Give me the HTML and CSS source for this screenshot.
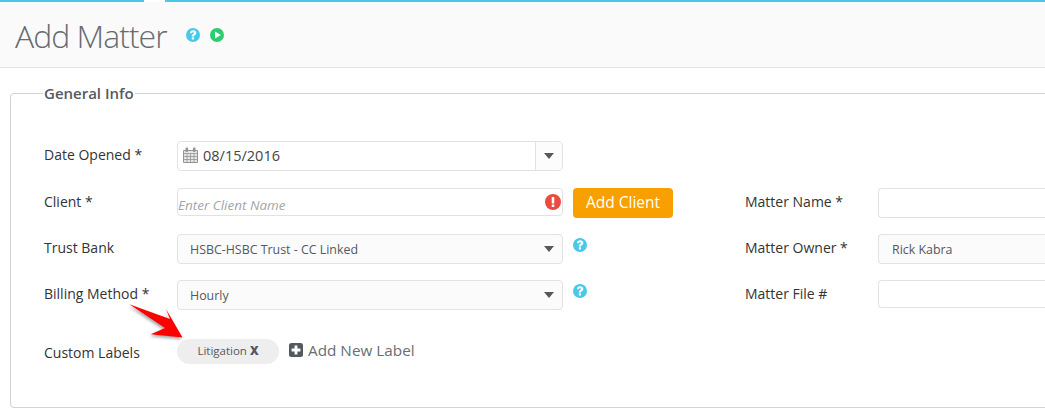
FILE: index.html
```html
<!DOCTYPE html>
<html lang="en">
<head>
<meta charset="utf-8">
<title>Add Matter</title>
<link rel="stylesheet" href="styles.css">
</head>
<body>
<svg class="defs" width="0" height="0" aria-hidden="true">
  <symbol id="help" viewBox="0 0 14 14">
    <circle cx="7" cy="7" r="7" fill="#4ac8ea"/>
    <path d="M3.900 5.200C4 3.300 5.400 2.300 7.100 2.300c1.900 0 3.200 1.100 3.200 2.700 0 1.200-.7 1.800-1.500 2.300-.6.400-.8.700-.8 1.100H5.800c0-1.200.5-1.900 1.300-2.400.6-.4.9-.6.9-1 0-.5-.4-.8-1-.8-.7 0-1.100.4-1.200 1z" fill="#fff"/>
    <rect x="5.800" y="9.300" width="2.200" height="2.200" fill="#fff"/>
  </symbol>
</svg>
<div class="tabline"><span class="tabgap"></span></div>
<header class="head">
  <h1>Add Matter</h1>
  <svg class="ico"><use href="#help"/></svg>
  <svg class="ico" viewBox="0 0 14 14"><circle cx="7" cy="7" r="7" fill="#2ecc71"/><path d="M5 3.400v7.200L10.800 7z" fill="#fff"/></svg>
</header>
<main class="page">
  <fieldset class="box">
    <legend>General Info</legend>
    <div class="form">
      <label>Date Opened *</label>
      <div class="ctl date">
        <svg class="cal" viewBox="0 0 15 16"><path d="M.5 3.500h14V15.500H.5z" fill="#e6e6e6" stroke="#949494" stroke-width="1"/><path d="M.5 6.500h14M.5 9.500h14M.5 12.500h14M4 6.500v9M7.500 6.500v9M11 6.500v9" stroke="#949494" stroke-width=".8" fill="none"/><rect x="2.500" y="0.500" width="2.600" height="4.500" rx="1" fill="#949494"/><rect x="9.900" y="0.500" width="2.600" height="4.500" rx="1" fill="#949494"/></svg>
        <span class="dateval">08/15/2016</span>
        <span class="split"><i class="caret"></i></span>
      </div>
      <span></span><span></span><span></span>

      <label>Client *</label>
      <div class="ctl client">
        <span class="ph">Enter Client Name</span>
        <svg class="err" viewBox="0 0 16 16"><circle cx="8" cy="8" r="8" fill="#e74c3c"/><rect x="6.700" y="3" width="2.600" height="6.600" rx=".6" fill="#fff"/><rect x="6.700" y="10.600" width="2.600" height="2.400" rx=".5" fill="#fff"/></svg>
      </div>
      <div class="aside"><button class="add" type="button">Add Client</button></div>
      <label>Matter Name *</label>
      <div class="ctl open"></div>

      <label>Trust Bank</label>
      <div class="ctl sel"><span>HSBC-HSBC Trust - CC Linked</span><i class="caret"></i></div>
      <div class="aside"><svg class="ico"><use href="#help"/></svg></div>
      <label>Matter Owner *</label>
      <div class="ctl sel open"><span>Rick Kabra</span></div>

      <label>Billing Method *</label>
      <div class="ctl sel"><span>Hourly</span><i class="caret"></i></div>
      <div class="aside"><svg class="ico"><use href="#help"/></svg></div>
      <label>Matter File #</label>
      <div class="ctl open short"></div>

      <label>Custom Labels</label>
      <div class="labels">
        <span class="chip"><span class="chiptext">Litigation <b>X</b></span></span>
        <span class="addlabel">
          <svg class="plus" viewBox="0 0 14 14"><rect width="14" height="14" rx="2.500" fill="#55585e"/><path d="M5.600 2.600h2.800v3h3v2.800h-3v3H5.600v-3h-3V5.600h3z" fill="#fff"/></svg>
          Add New Label
        </span>
      </div>
    </div>
  </fieldset>
</main>
<svg class="arrow" width="70" height="50" viewBox="0 0 70 50">
  <path d="M3.300 4.300 L44 19 L40 9 L56.500 37.500 L24.700 34.300 L39 28 Z" fill="#f00"/>
</svg>
</body>
</html>
```
FILE: styles.css
```css
* { box-sizing: border-box; }
html, body { margin: 0; height: 100%; }
body {
  position: relative;
  width: 1045px;
  height: 413px;
  overflow: hidden;
  background: #fff;
  font-family: "Open Sans", "Noto Sans", sans-serif;
  color: #333;
}
.defs { position: absolute; }
.tabline { height: 2px; background: #4ac8ea; padding-left: 144px; }
.tabgap { display: block; width: 21px; height: 2px; background: #fff; }
.head {
  height: 66px;
  background: #fafafa;
  border-bottom: 1px solid #e4e4e4;
  padding: 0 0 0 15px;
  display: flex;
  align-items: center;
  gap: 10px;
}
.head h1 {
  margin: 0 9px 0 0;
  font-family: "Open Sans Light", "Open Sans", sans-serif;
  font-size: 32px;
  font-weight: 300;
  letter-spacing: -1px;
  color: #666b71;
  line-height: 1;
  position: relative;
  top: 1px;
}
.ico { width: 14px; height: 14px; display: block; flex: none; }
.page { padding: 15px 0 0 10px; }
.box {
  margin: 0 -20px 0 0;
  padding: 0 0 0 33px;
  height: 325px;
  border: 1px solid #d2d2d2;
  border-radius: 4px;
  min-width: 0;
}
legend {
  padding: 0 1px;
  margin-left: -1px;
  font-size: 15px;
  font-weight: 600;
  color: #555a60;
  line-height: 20px;
}
.form {
  display: grid;
  grid-template-columns: 133px 386px 182px 133px 1fr;
  grid-template-rows: 47px 46px 46px 59px 30px;
  padding-top: 38px;
}
label {
  font-size: 14px;
  line-height: 20px;
  color: #333;
  padding-top: 4px;
}
.ctl {
  height: 30px;
  border: 1px solid #e2e2e2;
  border-radius: 4px;
  background: #fff;
  display: flex;
  align-items: center;
  position: relative;
}
.date { padding-left: 5px; }
.cal { width: 15px; height: 16px; flex: none; margin-top: -2px; }
.dateval { margin: -2px 0 0 5px; font-size: 14.5px; color: #444; }
.split {
  position: absolute;
  right: 0; top: 0; bottom: 0;
  width: 27px;
  border-left: 1px solid #e2e2e2;
  background: #fcfcfc;
  border-radius: 0 4px 4px 0;
  display: flex;
  align-items: center;
  justify-content: center;
}
.caret {
  display: block;
  width: 0; height: 0;
  border: 5px solid transparent;
  border-top: 6px solid #55585e;
  border-bottom: 0;
}
.client { height: 28px; }
.ph { padding: 5px 0 0 0; font-size: 13.5px; font-style: italic; color: #a3a6aa; }
.err { position: absolute; right: 1px; top: 5px; width: 16px; height: 16px; }
.aside { padding-left: 10px; }
.aside .ico { margin-top: 4px; }
.add {
  display: block;
  width: 100px;
  height: 30px;
  padding: 0 0 2px;
  border: 0;
  border-radius: 4px;
  background: #f7a000;
  color: #fff;
  font: 15.5px "Open Sans", sans-serif;
}
.sel { background: #fbfbfb; justify-content: space-between; padding: 0 8px 0 12px; font-size: 12.4px; color: #55585e; }
.open { border-right: 0; border-radius: 4px 0 0 4px; }
.sel.open { padding-left: 13px; }
.short { height: 28px; }
.labels { grid-column: 2 / 6; display: flex; align-items: flex-start; gap: 10px; }
.chip {
  width: 102px;
  height: 25px;
  border-radius: 13px;
  background: #eeeeee;
  font-size: 11.5px;
  color: #55585e;
  display: flex;
  align-items: center;
  justify-content: center;
  padding-bottom: 2px;
}
.chiptext { display: flex; align-items: center; gap: 3px; }
.chip b { font-weight: 800; font-size: 12px; }
.addlabel {
  display: flex;
  align-items: center;
  gap: 5px;
  height: 21px;
  font-size: 15.3px;
  color: #6a6d72;
}
.plus { width: 14px; height: 14px; }
.arrow {
  position: absolute;
  left: 126px;
  top: 300px;
  filter: drop-shadow(-1px 2px 1.5px rgba(0, 0, 0, .35));
}
```
